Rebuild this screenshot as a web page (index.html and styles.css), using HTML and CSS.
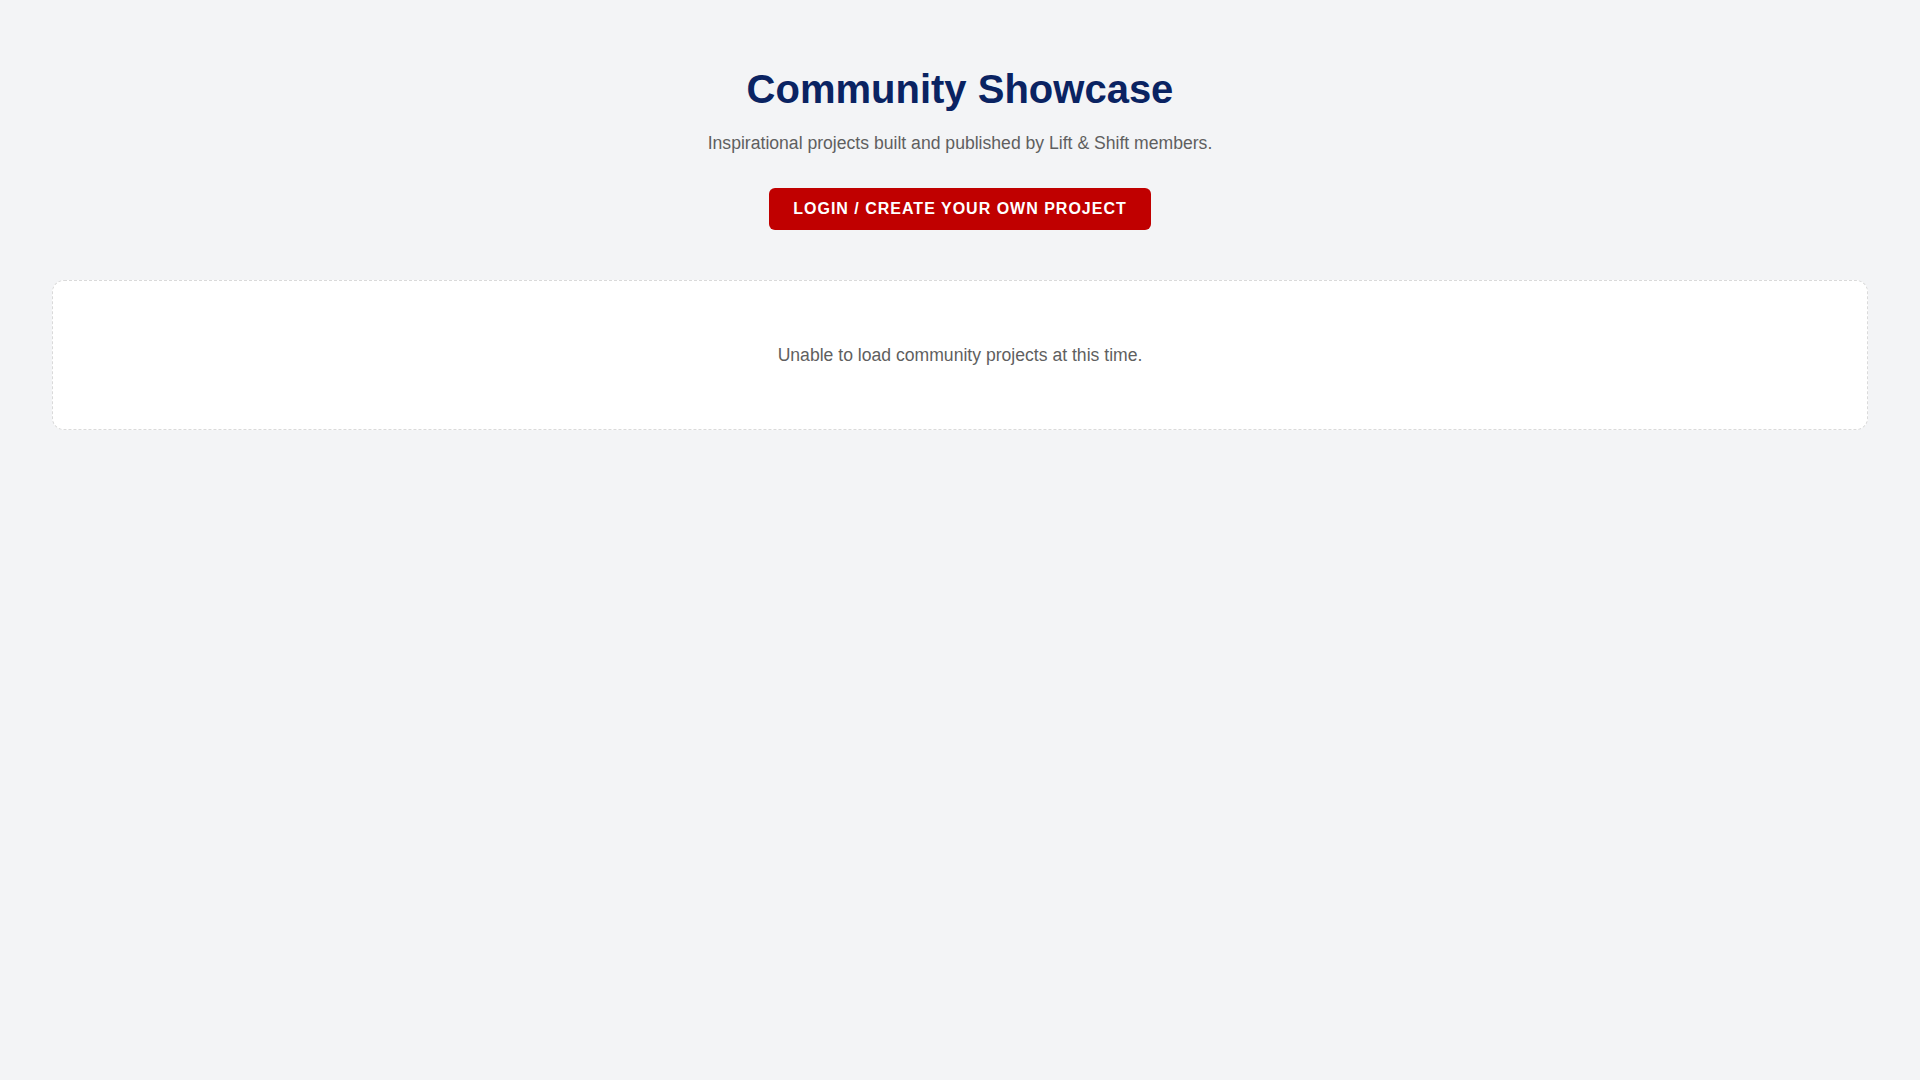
FILE: index.html
```html
<!DOCTYPE html>
<html lang="en">
<head>
<meta charset="utf-8">
<title>Community Showcase</title>
<link rel="stylesheet" href="styles.css">
</head>
<body>
<main class="page">
  <header class="hero">
    <h1 class="hero-title">Community Showcase</h1>
    <p class="hero-subtitle">Inspirational projects built and published by Lift &amp; Shift members.</p>
    <a class="hero-button" href="#">LOGIN / CREATE YOUR OWN PROJECT</a>
  </header>
  <section class="projects-empty">
    <p class="empty-message">Unable to load community projects at this time.</p>
  </section>
</main>
</body>
</html>
```

FILE: styles.css
```css
html, body {
  margin: 0;
  padding: 0;
}

body {
  background: #f3f4f6;
  font-family: "Liberation Sans", Arial, Helvetica, sans-serif;
  color: #333;
}

.page {
  padding: 64.5px 52px 48px;
  display: flex;
  flex-direction: column;
}

.hero {
  display: flex;
  flex-direction: column;
  align-items: center;
  text-align: center;
}

.hero-title {
  margin: 0 0 17.7px;
  font-size: 40px;
  line-height: 48px;
  font-weight: 700;
  color: #0a2362;
}

.hero-subtitle {
  margin: 0 0 31.8px;
  font-size: 17.6px;
  line-height: 26.4px;
  color: #5f5f5f;
}

.hero-button {
  display: inline-block;
  background: #c00000;
  color: #ffffff;
  text-decoration: none;
  font-size: 16px;
  font-weight: 700;
  letter-spacing: 1px;
  line-height: 18px;
  padding: 11.75px 24px;
  border-radius: 6px;
}

.projects-empty {
  margin-top: 50.5px;
  background: #ffffff;
  border: 1px dashed #dadada;
  border-radius: 12px;
  height: 148px;
  display: flex;
  align-items: center;
  justify-content: center;
}

.empty-message {
  margin: 0;
  font-size: 17.6px;
  line-height: 24px;
  color: #5f5f5f;
}
```
